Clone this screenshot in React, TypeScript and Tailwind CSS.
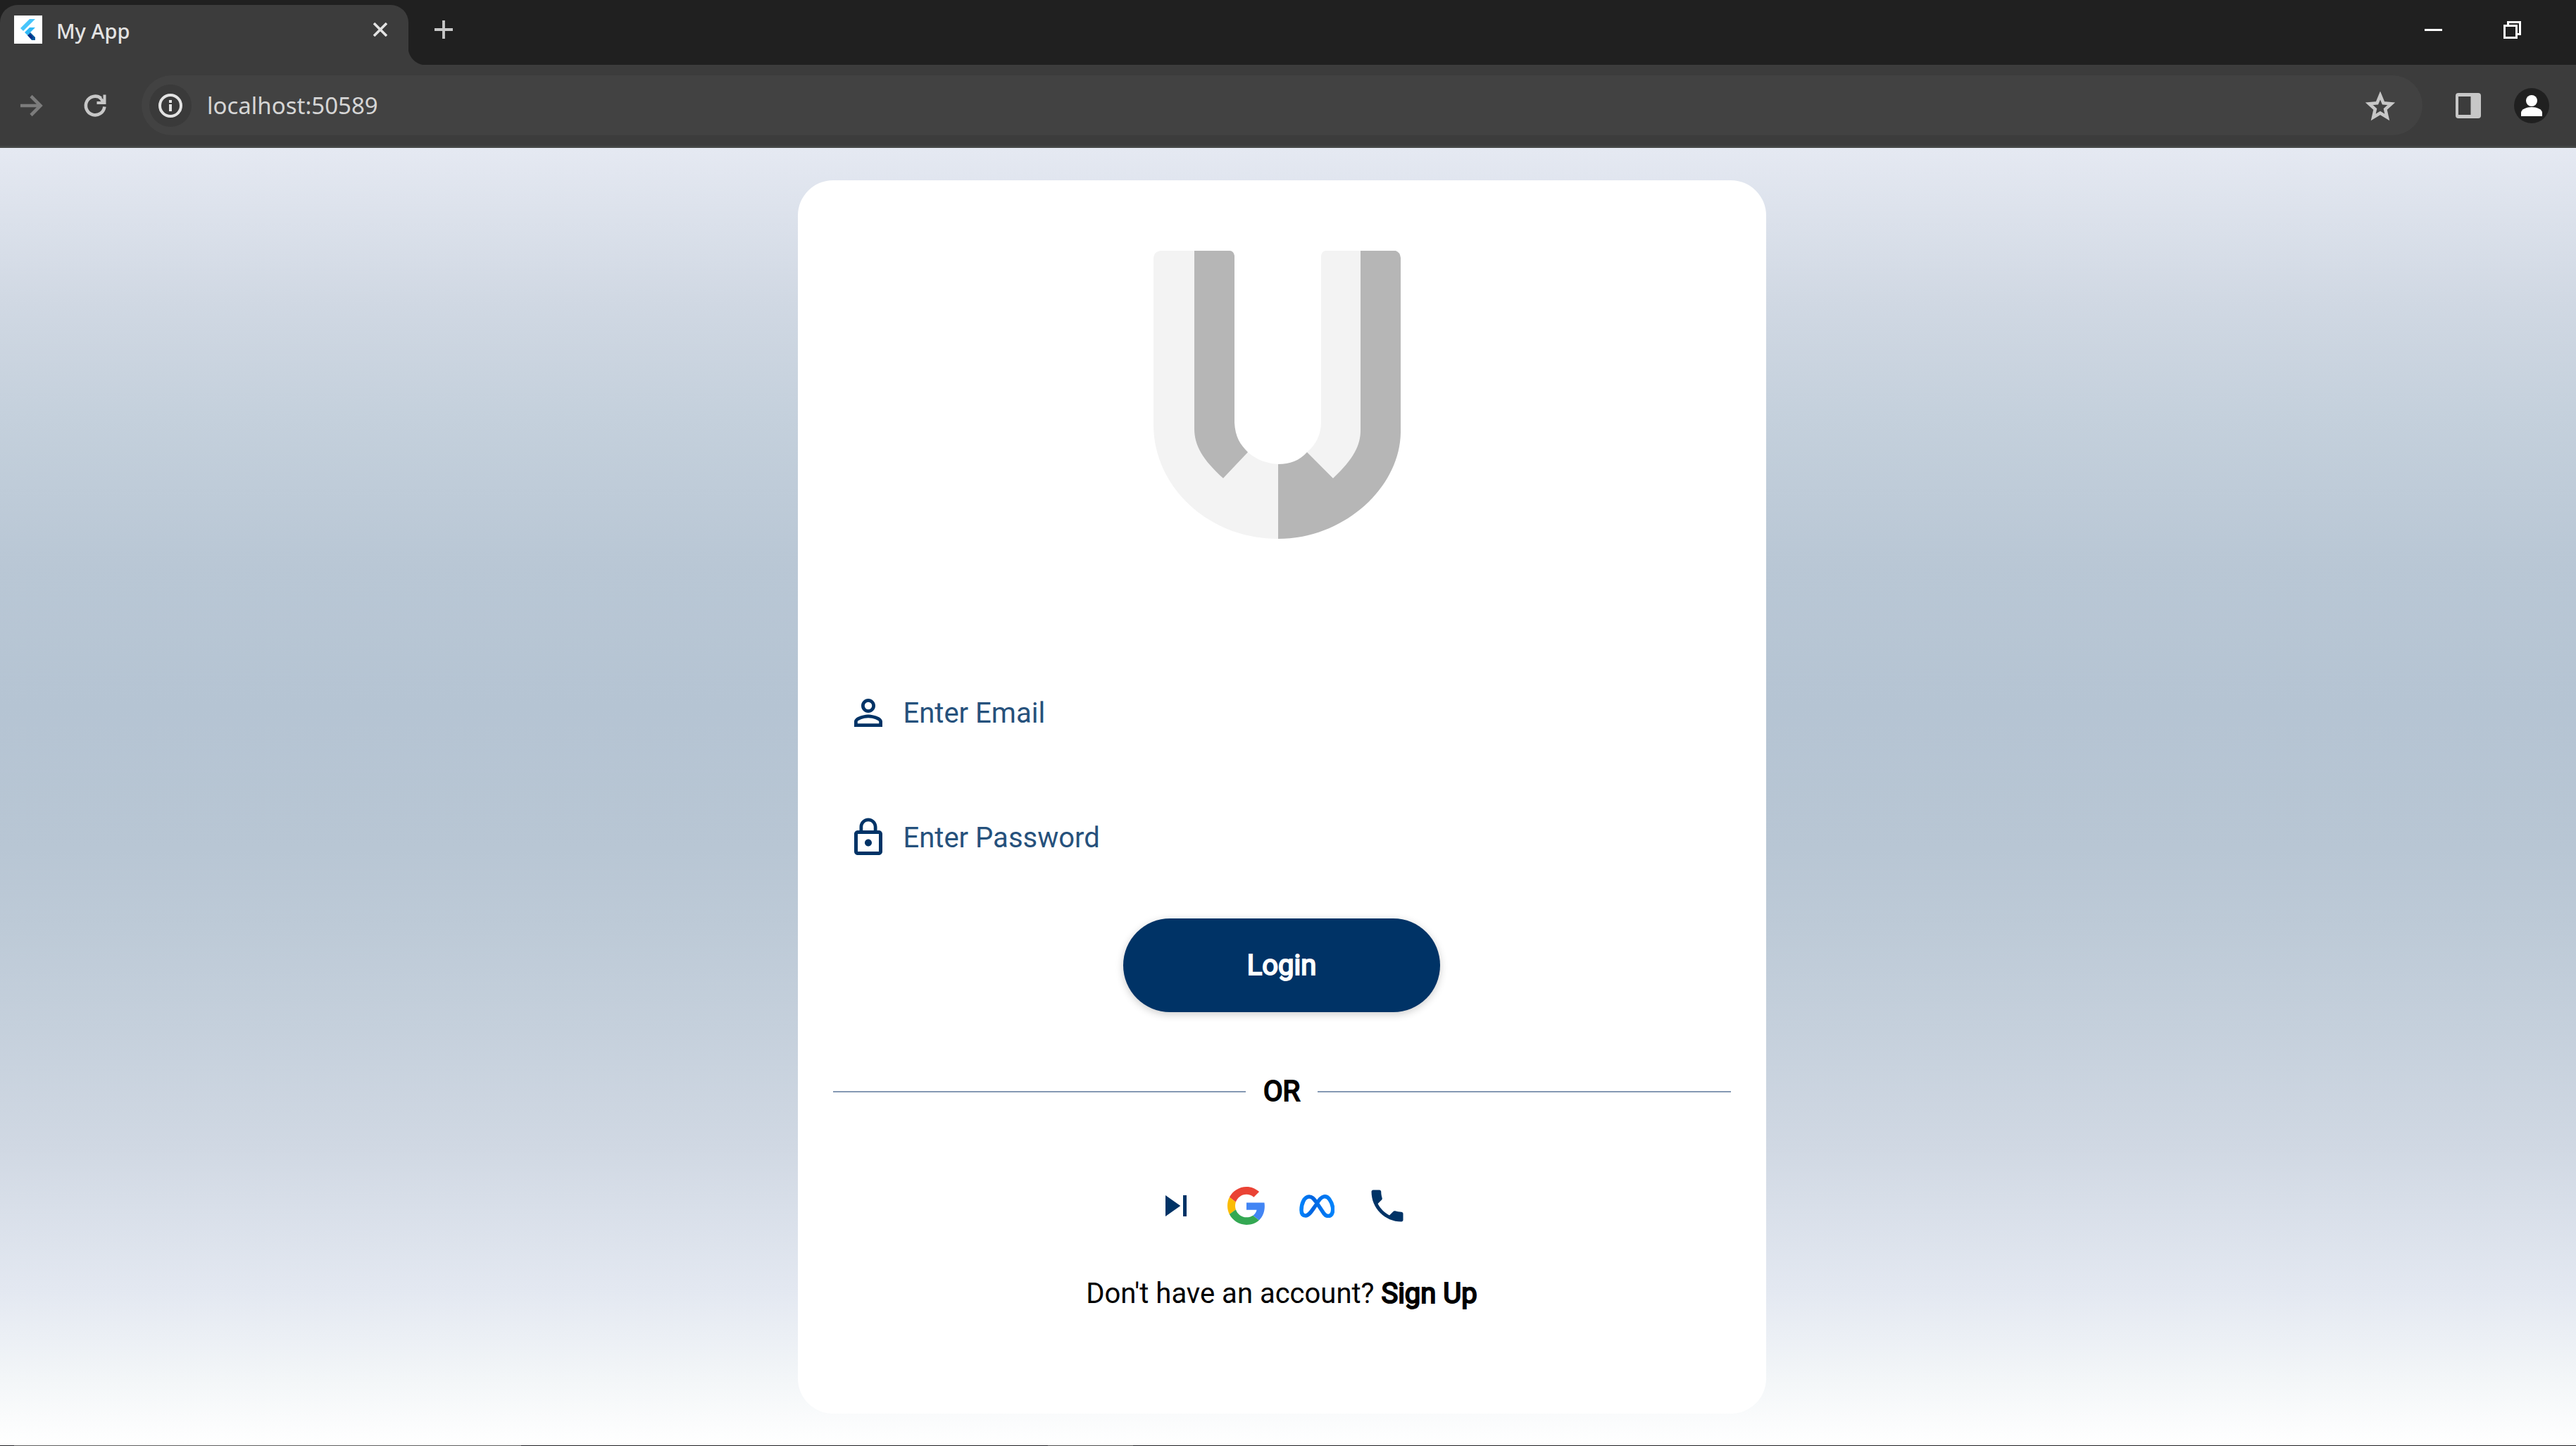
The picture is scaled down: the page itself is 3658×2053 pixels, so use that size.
import { useId } from "react";
import { MdLockOutline, MdPhone, MdSkipNext } from "react-icons/md";

function FlutterMark() {
  return (
    <span className="flex size-10 items-center justify-center bg-white">
      <svg viewBox="0 0 24 30" className="h-[30px] w-6">
        <path d="M14 0h8L5 17l-4-4z" fill="#47c5fb" />
        <path d="M14 12h8l-7 7-4 4-4-4z" fill="#2fb8f6" />
        <path d="m11 23 4-4 7 7v4h-5z" fill="#00569e" />
        <path d="m11 23 5-1 3 5-3 1z" fill="#0b2a86" />
      </svg>
    </span>
  );
}

function TabStrip() {
  return (
    <header className="flex h-[92px] items-end bg-[#202020]">
      <div className="flex h-[85px] w-[580px] items-start rounded-t-[25px] bg-[#3c3c3c] pt-[15px] pr-[20px] pl-5">
        <FlutterMark />
        <span className="ml-5 flex-1 pt-0.5 font-['Noto_Sans',sans-serif] text-[29px] leading-10 font-medium text-[#e3e3e3]">
          My App
        </span>
        <button aria-label="Close tab" className="flex size-10 items-center justify-center text-[#e3e3e3]">
          <svg viewBox="0 0 20 20" className="size-5" stroke="currentColor" strokeWidth="3.6">
            <path d="m1 1 18 18M19 1 1 19" />
          </svg>
        </button>
      </div>
      <div className="h-[25px] w-[25px] bg-[radial-gradient(circle_at_100%_0,#202020_25px,#3c3c3c_26px)]" />
      <button aria-label="New tab" className="flex h-[85px] w-[50px] items-start justify-center pt-[22px] text-[#c7c7c7]">
        <svg viewBox="0 0 26 26" className="size-[26px]" stroke="currentColor" strokeWidth="3.8">
          <path d="M13 0v26M0 13h26" />
        </svg>
      </button>
      <div className="ml-auto flex h-[85px] items-start gap-20 pr-[78px] pt-[15px] text-white">
        <button aria-label="Minimize" className="flex h-10 w-10 items-center justify-center">
          <span className="h-[3px] w-[25px] bg-white" />
        </button>
        <button aria-label="Restore" className="flex h-10 w-[25px] items-center justify-center">
          <svg viewBox="0 0 25 25" className="size-[25px]" fill="none" stroke="currentColor" strokeWidth="3">
            <path d="M1.5 6.5h17v17h-17zM6.500 6V1.500h17v17H19" />
          </svg>
        </button>
      </div>
    </header>
  );
}

function Toolbar() {
  return (
    <nav className="flex h-[118px] items-center border-b-[3px] border-[#454746] bg-[#3c3c3c] pr-[38px] pl-[19px]">
      <button aria-label="Forward" className="text-[#7c7c7c]">
        <svg viewBox="0 0 50 50" className="size-[50px]" fill="none" stroke="currentColor" strokeWidth="4.6">
          <path d="M10 25h28M25 11.500 38.500 25 25 38.500" />
        </svg>
      </button>
      <button aria-label="Reload" className="ml-[41px] text-[#c7c7c7]">
        <svg viewBox="0 0 50 50" className="size-[50px]" fill="none" stroke="currentColor" strokeWidth="4.600">
          <path d="M38.400 26.500A13.300 13.300 0 1 1 33.500 14.600" />
          <path d="M40.500 9.500v13.500H27.500v-4h6l-3-4 3-2 3 3V9.500z" fill="currentColor" stroke="none" />
        </svg>
      </button>
      <div className="ml-[41px] flex h-[85px] flex-1 items-center rounded-full bg-[#424242] pr-[35px] pl-[11px]">
        <button aria-label="Site information" className="flex size-[60px] items-center justify-center rounded-full bg-[#3a3a3a] text-[#e3e3e3]">
          <svg viewBox="0 0 34 34" className="size-[34px]" fill="none" stroke="currentColor" strokeWidth="4">
            <circle cx="17" cy="17" r="15" />
            <path d="M17 15v10M17 9v4" />
          </svg>
        </button>
        <input
          aria-label="Address"
          defaultValue="localhost:50589"
          className="ml-[22px] h-[60px] flex-1 bg-transparent font-['Noto_Sans',sans-serif] text-[33px] text-[#d5d5d5] outline-none"
        />
        <button aria-label="Bookmark this page" className="text-[#c7c7c7]">
          <svg viewBox="0 0 50 50" className="size-[50px]" fill="none" stroke="currentColor" strokeWidth="4.600">
            <path d="m25 10.500 4.500 10.800 11.200 1-8.500 7.700 2.600 11.400L25 35.500l-9.800 5.900L17.800 30l-8.500-7.700 11.200-1z" />
          </svg>
        </button>
      </div>
      <button aria-label="Side panel" className="ml-[40px] flex size-[50px] items-center justify-center text-[#c7c7c7]">
        <svg viewBox="0 0 36 36" className="size-9" fill="currentColor">
          <path fillRule="evenodd" d="M4 0h28a4 4 0 0 1 4 4v28a4 4 0 0 1-4 4H4a4 4 0 0 1-4-4V4a4 4 0 0 1 4-4zm0 5v26h17.500V5z" />
        </svg>
      </button>
      <button aria-label="Profile" className="ml-[40px] flex size-[50px] items-center justify-center rounded-full bg-[#202020]">
        <svg viewBox="0 0 30 30" className="size-[30px]" fill="#fff">
          <circle cx="15" cy="8" r="8" />
          <path d="M0 30v-5c0-5 8-8 15-8s15 3 15 8v5z" />
        </svg>
      </button>
    </nav>
  );
}

function UnionMark() {
  return (
    <svg viewBox="0 0 352 410" className="h-[410px] w-[352px]" role="img" aria-label="U logo">
      <path d="M0 10Q1 1 10 0H58V250Q60 290 99 323L134 286Q152 302 177 303V409C78 409 0 335 0 247Z" fill="#f3f3f3" />
      <path d="M58 0h51q5 1 6 7v237c1 20 8 31 19 42l-35 37C70 297 58 276 58 253z" fill="#b6b6b6" />
      <path d="M238 7q1-6 6-7h51v255c-2 25-14 44-39 68l-38-37c12-10 20-24 20-43z" fill="#f3f3f3" />
      <path d="M294 0h50q6 2 7 10v248c-1 78-80 151-174 151V303c17 0 30-5 41-17l37 37c29-27 39-47 39-68z" fill="#b6b6b6" />
    </svg>
  );
}

function PersonIcon() {
  return (
    <svg viewBox="0 0 24 24" className="size-[60px]" fill="currentColor">
      <path d="M12 5.900a2.100 2.100 0 1 1 0 4.200 2.100 2.100 0 0 1 0-4.200m0 9c2.970 0 6.100 1.460 6.100 2.100v1.100H5.900V17c0-.64 3.130-2.100 6.100-2.100M12 4C9.790 4 8 5.790 8 8s1.790 4 4 4 4-1.790 4-4-1.790-4-4-4m0 9c-2.670 0-8 1.340-8 4v3h16v-3c0-2.660-5.330-4-8-4" />
    </svg>
  );
}

function GoogleIcon() {
  return (
    <svg viewBox="0 0 48 48" className="size-[54px]">
      <path fill="#EA4335" d="M24 9.500c3.540 0 6.710 1.220 9.210 3.600l6.850-6.850C35.900 2.380 30.470 0 24 0 14.620 0 6.510 5.380 2.560 13.220l7.980 6.190C12.430 13.720 17.740 9.500 24 9.500z" />
      <path fill="#4285F4" d="M46.980 24.550c0-1.570-.15-3.090-.38-4.550H24v9.020h12.940c-.58 2.960-2.260 5.480-4.780 7.180l7.730 6c4.510-4.180 7.090-10.360 7.090-17.650z" />
      <path fill="#FBBC05" d="M10.530 28.590c-.48-1.450-.76-2.990-.76-4.590s.27-3.140.76-4.590l-7.980-6.190C.92 16.460 0 20.120 0 24c0 3.880.92 7.540 2.560 10.780l7.970-6.190z" />
      <path fill="#34A853" d="M24 48c6.480 0 11.930-2.130 15.890-5.810l-7.730-6c-2.150 1.450-4.920 2.300-8.160 2.300-6.260 0-11.570-4.220-13.470-9.910l-7.980 6.190C6.510 42.620 14.620 48 24 48z" />
    </svg>
  );
}

function MetaIcon() {
  const id = useId();
  return (
    <svg viewBox="0 0 50 33" className="h-[33px] w-[50px]" fill="none" strokeWidth="5.500">
      <defs>
        <linearGradient id={id} x1="0" x2="1">
          <stop offset="0" stopColor="#0082fb" />
          <stop offset=".35" stopColor="#0064e0" />
          <stop offset=".65" stopColor="#0073ee" />
          <stop offset="1" stopColor="#0082fb" />
        </linearGradient>
      </defs>
      <path stroke={`url(#${id})`} d="M25 13C32 0 39 1 43 7c5 7 6 16 3 21-3 4-8 3-11-1L25 12C20 5 18 3 14 3 7 3 3 13 3 22c0 5 2 8 6 8 5 0 8-6 16-17" />
    </svg>
  );
}

const socials = [
  { label: "Skip", icon: <MdSkipNext className="size-[60px]" /> },
  { label: "Continue with Google", icon: <GoogleIcon /> },
  { label: "Continue with Meta", icon: <MetaIcon /> },
  { label: "Continue with phone", icon: <MdPhone className="size-[60px]" /> },
];

const fieldInput =
  "h-[60px] flex-1 bg-transparent text-[40px] text-[#003366] outline-none placeholder:text-[#003366] placeholder:opacity-85";

function LoginCard() {
  return (
    <main className="flex w-full max-w-[1375px] flex-col items-center rounded-[50px] bg-white px-[50px] pt-[100px] pb-[138px] text-[40px] leading-[47px]">
      <div className="pr-3">
        <UnionMark />
      </div>
      <form className="mt-[216px] flex w-full flex-col items-center" onSubmit={(e) => e.preventDefault()}>
        <label className="flex w-full items-center gap-[20px] pl-5 text-[#003366]">
          <PersonIcon />
          <input type="email" aria-label="Enter Email" placeholder="Enter Email" className={fieldInput} />
        </label>
        <label className="mt-[117px] flex w-full items-center gap-[20px] pl-5 text-[#003366]">
          <MdLockOutline className="size-[60px]" />
          <input type="password" aria-label="Enter Password" placeholder="Enter Password" className={fieldInput} />
        </label>
        <button className="mt-[85px] h-[133px] w-[450px] rounded-full bg-[#003366] text-white shadow-[0_3px_12px_rgba(0,0,0,0.2)] [-webkit-text-stroke:2px_currentColor]">
          Login
        </button>
      </form>
      <div className="mt-[89px] flex w-full items-center gap-[25px]">
        <hr className="flex-1 border-t-2 border-[#8599b3]" />
        <span className="text-black [-webkit-text-stroke:2px_currentColor]">OR</span>
        <hr className="flex-1 border-t-2 border-[#8599b3]" />
      </div>
      <div className="mt-[109px] flex text-[#003366]">
        {socials.map((s) => (
          <button key={s.label} aria-label={s.label} className="flex h-[60px] w-[100px] items-center justify-center">
            {s.icon}
          </button>
        ))}
      </div>
      <p className="mt-[71px] text-black">
        Don't have an account?{" "}
        <a href="#signup" className="[-webkit-text-stroke:2px_currentColor]">
          Sign Up
        </a>
      </p>
    </main>
  );
}

export default function App() {
  return (
    <div className="flex min-h-screen flex-col font-[Roboto,sans-serif]">
      <TabStrip />
      <Toolbar />
      <div className="flex flex-1 justify-center bg-[linear-gradient(to_bottom,#e5e9f2,#d0d8e3_12%,#c4d0dc_21%,#b9c7d5_32%,#b5c4d3_43%,#b8c6d4_54%,#bdcad7_60%,#c5d0dc_68%,#d0d8e3_77%,#e3e8f1_88%,#f3f6f8_95%,#ffffff)] pt-[46px] pr-[18px] pb-[45px]">
        <LoginCard />
      </div>
      <div className="flex h-px bg-[#202124] pl-5">
        <div className="w-[720px] bg-[#606060]" />
        <div className="ml-[748px] w-[121px] bg-[#505050]" />
      </div>
    </div>
  );
}
